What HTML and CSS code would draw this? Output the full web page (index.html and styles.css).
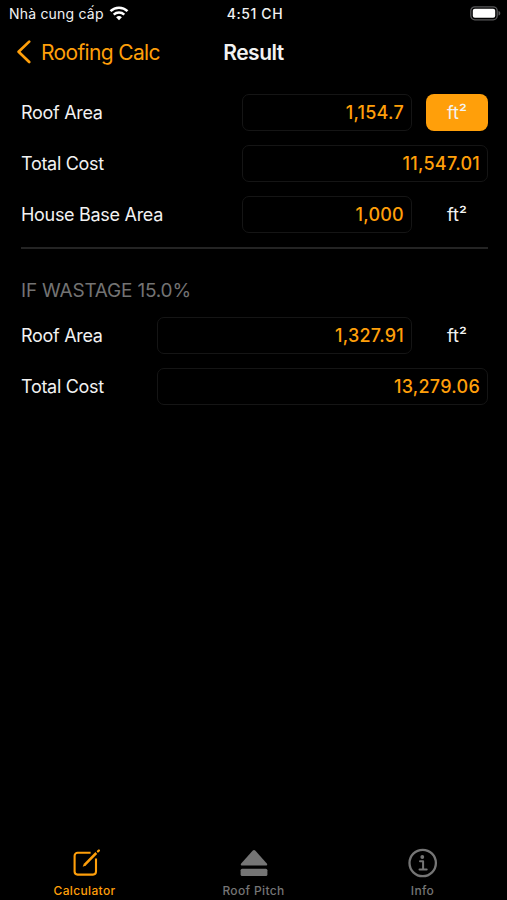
FILE: index.html
```
<!DOCTYPE html>
<html lang="vi">
<head>
    <meta charset="UTF-8">
    <meta name="viewport" content="width=device-width, initial-scale=1.0">
    <title>Roofing Calc</title>
    <link rel="stylesheet" href="styles.css">
</head>
<body>

<div class="status-bar">
    <div class="carrier">
        <span class="carrier-name">Nhà cung cấp</span>
        <svg class="wifi" width="20" height="15" viewBox="0 0 20 15">
            <path d="M1.5 5.2a12.2 12.2 0 0 1 17 0" fill="none" stroke="#fff" stroke-width="2.5"/>
            <path d="M4.7 8.7a7.6 7.6 0 0 1 10.6 0" fill="none" stroke="#fff" stroke-width="2.4"/>
            <path d="M10 14.3L7.1 11.3a4.2 4.2 0 0 1 5.8 0z" fill="#fff"/>
        </svg>
    </div>
    <div class="time">4:51 CH</div>
    <div class="battery">
        <svg width="31" height="15" viewBox="0 0 31 15">
            <rect x="0.8" y="0.8" width="26.4" height="13" rx="4" fill="none" stroke="#58585a" stroke-width="1.3"/>
            <rect x="2.8" y="2.8" width="22.4" height="9" rx="2" fill="#fff"/>
            <path d="M28.5 5c1.2.4 1.8 1.2 1.8 2.3s-.6 1.9-1.8 2.3z" fill="#58585a"/>
        </svg>
    </div>
</div>

<div class="nav-bar">
    <div class="back">
        <svg width="15" height="24" viewBox="0 0 15 24">
            <path d="M13.2 1.6L2.6 11.8l10.6 10.2" fill="none" stroke="#ff9f0a" stroke-width="2.7" stroke-linecap="round" stroke-linejoin="round"/>
        </svg>
        <span>Roofing Calc</span>
    </div>
    <h1>Result</h1>
</div>

<main>
    <div class="row">
        <span class="label">Roof Area</span>
        <div class="field">1,154.7</div>
        <div class="unit active">ft²</div>
    </div>
    <div class="row">
        <span class="label">Total Cost</span>
        <div class="field">11,547.01</div>
    </div>
    <div class="row">
        <span class="label">House Base Area</span>
        <div class="field">1,000</div>
        <div class="unit">ft²</div>
    </div>

    <hr>

    <h2>IF WASTAGE 15.0%</h2>
    <div class="row wide">
        <span class="label">Roof Area</span>
        <div class="field">1,327.91</div>
        <div class="unit">ft²</div>
    </div>
    <div class="row wide">
        <span class="label">Total Cost</span>
        <div class="field">13,279.06</div>
    </div>
</main>

<nav class="tabs">
    <div class="tab selected">
        <svg width="30" height="30" viewBox="0 0 30 30">
            <path d="M20.6 4.8H7.6a3 3 0 0 0-3 3v15.8a3 3 0 0 0 3 3H23a3 3 0 0 0 3-3V10.4" fill="none" stroke="currentColor" stroke-width="2.1"/>
            <path d="M26.3 5L14.6 16.9" stroke="currentColor" stroke-width="2.5"/>
            <path d="M14 15.6l-1.3 3.2 3.3-1.2z" fill="currentColor"/>
            <path d="M28 3.4l.9-.9" stroke="currentColor" stroke-width="2.2" stroke-linecap="round"/>
        </svg>
        <span>Calculator</span>
    </div>
    <div class="tab">
        <svg width="30" height="30" viewBox="0 0 30 30">
            <path d="M13.8 2.6a1.7 1.7 0 0 1 2.4 0l11.6 12.9c.8.9.4 2.1-.8 2.1H3c-1.2 0-1.6-1.2-.8-2.1z" fill="currentColor"/>
            <rect x="1.6" y="20.7" width="26.8" height="7.3" rx="1.5" fill="currentColor"/>
        </svg>
        <span>Roof Pitch</span>
    </div>
    <div class="tab">
        <svg width="30" height="30" viewBox="0 0 30 30">
            <circle cx="14.7" cy="15" r="13.2" fill="none" stroke="currentColor" stroke-width="2.3"/>
            <circle cx="14.3" cy="9" r="1.9" fill="currentColor"/>
            <path d="M12 13.2h3.1v8.2M11.5 21.4h7.2" fill="none" stroke="currentColor" stroke-width="2" stroke-linecap="round" stroke-linejoin="round"/>
        </svg>
        <span>Info</span>
    </div>
</nav>

</body>
</html>
```
FILE: styles.css
```
* {
    box-sizing: border-box;
}
body {
    display: flex;
    flex-direction: column;
    height: 900px;
    margin: 0;
    overflow: hidden;
    background-color: #000;
    color: #f2f2f2;
    font-family: Inter, "Noto Sans", sans-serif;
    font-size: 18px;
}
svg {
    display: block;
    flex-shrink: 0;
}
span {
    white-space: nowrap;
}
.status-bar {
    display: grid;
    grid-template-columns: 1fr 62px 1fr;
    align-items: center;
    height: 27px;
    padding: 0 6px 0 9px;
    font-size: 14px;
}
.carrier {
    display: flex;
    align-items: center;
    gap: 5px;
    letter-spacing: 0.2px;
}
.time {
    font-weight: 500;
    letter-spacing: 0.6px;
    text-align: center;
    white-space: nowrap;
}
.battery {
    justify-self: end;
}
.nav-bar {
    display: grid;
    grid-template-columns: 1fr auto 1fr;
    align-items: center;
    height: 50px;
    padding: 0 16px;
}
.back {
    display: flex;
    align-items: center;
    gap: 10px;
    color: #ff9f0a;
    font-size: 21px;
    letter-spacing: -0.65px;
}
h1 {
    margin: 0;
    font-size: 21px;
    font-weight: 600;
    letter-spacing: -0.5px;
}
main {
    flex: 1;
    padding: 17px 19px 0 21px;
}
.row {
    display: grid;
    grid-template-columns: 221px 170px 61px;
    align-items: center;
    height: 37px;
    margin-bottom: 14px;
}
.row.wide {
    grid-template-columns: 136px 255px 61px;
}
.label {
    letter-spacing: -0.3px;
}
.field {
    height: 37px;
    padding-right: 7px;
    border: 1px solid #151515;
    border-radius: 7px;
    color: #ff9f0a;
    font-weight: 500;
    letter-spacing: 0.25px;
    line-height: 35px;
    text-align: right;
}
.field:last-child {
    grid-column: 2 / 4;
    margin-right: -15px;
}
.unit {
    width: 62px;
    height: 37px;
    margin-left: 14px;
    border-radius: 8px;
    line-height: 37px;
    text-align: center;
}
.unit.active {
    background-color: #ff9f0a;
}
hr {
    height: 2px;
    margin: 0 0 30px;
    border: none;
    background-color: #242424;
}
h2 {
    margin: 0 0 14px;
    color: #737373;
    font-size: 19px;
    font-weight: 400;
    letter-spacing: -0.2px;
    line-height: 24px;
}
.tabs {
    display: grid;
    grid-template-columns: repeat(3, 1fr);
    height: 52px;
}
.tab {
    display: flex;
    flex-direction: column;
    align-items: center;
    gap: 6px;
    color: #757575;
    font-size: 12px;
    font-weight: 500;
    letter-spacing: 0.35px;
    line-height: 14px;
}
.tab.selected {
    color: #ff9f0a;
}
```
